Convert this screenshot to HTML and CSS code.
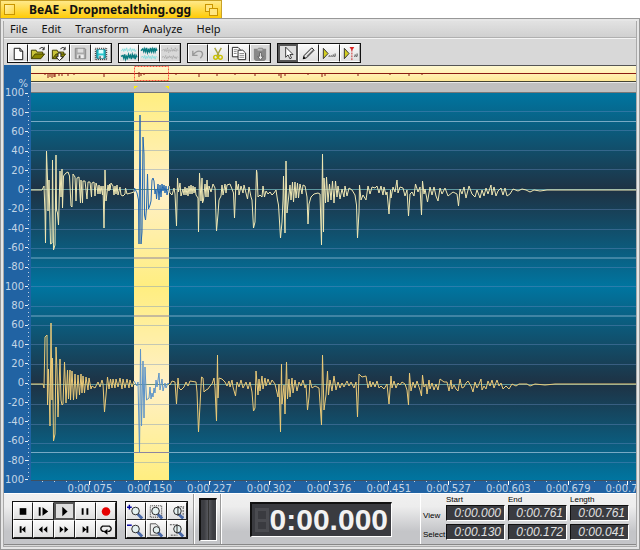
FILE: index.html
```html
<!DOCTYPE html>
<html lang="en">
<head>
    <meta charset="UTF-8">
    <meta name="viewport" content="width=device-width, initial-scale=1.0">
    <title>BeAE - Dropmetalthing.ogg</title>
    <link rel="stylesheet" href="styles.css">
</head>
<body>
    <header class="tab">
        <button class="tab-close" aria-label="Close"></button>
        <h1 class="tab-title">BeAE - Dropmetalthing.ogg</h1>
        <button class="tab-zoom" aria-label="Zoom">
            <svg width="13" height="12" viewBox="0 0 13 12"><rect x=".5" y=".5" width="7" height="7" fill="#ffe680" stroke="#c99500"/><rect x="4.500" y="4.500" width="8" height="7" fill="#ffe680" stroke="#c99500"/></svg>
        </button>
    </header>

    <main class="window">
        <nav class="menubar">
            <button>File</button>
            <button>Edit</button>
            <button>Transform</button>
            <button>Analyze</button>
            <button>Help</button>
        </nav>

        <div class="toolbar">
            <div class="group">
                <button aria-label="New"><svg viewBox="0 0 19 18"><path d="M5.500 3.500h6l3 3v9h-9z" fill="#fff" stroke="#111"/><path d="M11.500 3.500v3h3" fill="none" stroke="#111"/></svg></button>
                <button aria-label="Open"><svg viewBox="0 0 19 18"><path d="M2.500 14.500v-9h5l1 2h6v2" fill="#c9c43a" stroke="#3d3b00"/><path d="M2.500 14.500l4-5h10l-4 5z" fill="#8b8800" stroke="#3d3b00"/><path d="M11 4q3-3 5 0m0-2v3h-2" fill="none" stroke="#222"/></svg></button>
                <button aria-label="Open as"><svg viewBox="0 0 19 18"><path d="M2.500 14.500v-9h5l1 2h6v2" fill="#c9c43a" stroke="#3d3b00"/><path d="M2.500 14.500l4-5h10l-4 5z" fill="#8b8800" stroke="#3d3b00"/><path d="M11 4q3-3 5 0m0-2v3h-2" fill="none" stroke="#222"/><path d="M8.500 8.500h3v4h2.500l-4 4-4-4h2.500z" fill="#fff" stroke="#222"/></svg></button>
                <button class="off" aria-label="Save" disabled><svg viewBox="0 0 19 18"><path d="M4.500 3.500h10l1 1v10h-11z" fill="#aaa" stroke="#888"/><path d="M7 4h6v4H7z" fill="#ddd"/><path d="M6.500 10h7v4h-7z" fill="#eee"/><path d="M8 11h2v3H8z" fill="#777"/></svg></button>
                <button aria-label="Save selection"><svg viewBox="0 0 19 18"><path d="M3.500 3.500h12v12h-12z" fill="none" stroke="#111" stroke-dasharray="1 1"/><path d="M5 5h9v9H5z" fill="#28c7ce" stroke="#067"/><path d="M7 5h5v4H7z" fill="#dff"/><path d="M7 11h5v3H7z" fill="#eee"/><path d="M8 12h1v2H8z"/></svg></button>
            </div>
            <div class="group">
                <button aria-label="Left channel"><svg viewBox="0 0 19 18"><path d="M1 6h1l1-2 1 3 1-3 1 2 1-3 1 4 1-2 1 1 1-3 1 4 1-3 1 2 1-2 1 3 1-2" fill="none" stroke="#8adede"/><path d="M1 12l2-1 1 3 1-4 1 5 1-3 1 2 1-4 1 3 1-2 1 4 1-5 1 3 1-2 1 4 1-4 1 2" fill="none" stroke="#087b80" stroke-width="1.500"/></svg></button>
                <button aria-label="Right channel"><svg viewBox="0 0 19 18"><path d="M1 6l2-2 1 3 1-3 1 3 1-4 1 5 1-3 1 2 1-4 1 4 1-3 1 3 1-4 1 4 1-3 1 2" fill="none" stroke="#087b80" stroke-width="1.500"/><path d="M1 13l2-1 1 2 1-3 1 4 1-3 1 2 1-3 1 3 1-2 1 3 1-4 1 3 1-2 1 3 1-3 1 1" fill="none" stroke="#8adede"/></svg></button>
                <button class="off" aria-label="Both channels" disabled><svg viewBox="0 0 19 18"><path d="M1 6l2-2 1 3 1-3 1 3 1-4 1 5 1-3 1 2 1-4 1 4 1-3 1 3 1-4 1 4 1-3 1 2M1 13l2-1 1 2 1-3 1 4 1-3 1 2 1-3 1 3 1-2 1 3 1-4 1 3 1-2 1 3 1-3 1 1" fill="none" stroke="#aaa" stroke-dasharray="2 1"/></svg></button>
            </div>
            <div class="group">
                <button class="off" aria-label="Undo" disabled><svg viewBox="0 0 19 18"><path d="M4 6v5h5M4 11q4-6 9-4 3 3-1 7" fill="none" stroke="#999" stroke-width="1.500"/></svg></button>
                <button aria-label="Cut"><svg viewBox="0 0 19 18"><path d="M6 3l5 9M13 3l-5 9" stroke="#a8a440" stroke-width="1.500"/><circle cx="7" cy="13" r="2" fill="none" stroke="#c9c000" stroke-width="1.500"/><circle cx="12" cy="13" r="2" fill="none" stroke="#c9c000" stroke-width="1.500"/></svg></button>
                <button aria-label="Copy"><svg viewBox="0 0 19 18"><path d="M2.500 2.500h6l2 2v8h-8z" fill="#fff" stroke="#222"/><path d="M8.500 5.500h5l3 3v7h-8z" fill="#fff" stroke="#222"/><path d="M4 5h4M4 7h3M4 9h3M10 9h5M10 11h5M10 13h5" stroke="#888"/></svg></button>
                <button class="off" aria-label="Paste" disabled><svg viewBox="0 0 19 18"><path d="M3 4h4l1-1h4l1 1h3v11l-2 2H5l-2-2z" fill="#888"/><path d="M7 4h5v2H7z" fill="#bbb"/><path d="M9 8h2v4h2l-3 4-3-4h2z" fill="#eee" stroke="#666"/></svg></button>
            </div>
            <div class="group">
                <button class="on" aria-label="Select tool"><svg viewBox="0 0 19 18"><path d="M6.500 1.500v13l3-3 2.500 5 2-1-2-4.500h4z" fill="#fff" stroke="#111"/></svg></button>
                <button aria-label="Pencil tool"><svg viewBox="0 0 19 18"><path d="M4.500 14.500l1-3.500 8-8 2.500 2.500-8 8z" fill="#e8e8e8" stroke="#111"/><path d="M4 15l1-3 2 2z"/><path d="M8 12l7-7" stroke="#777"/></svg></button>
                <button aria-label="Play preview"><svg viewBox="0 0 19 18"><path d="M3.500 3.500v11l5-5.500z" fill="#d4cf20" stroke="#333"/><path d="M9 12h1v-1m1 1h1v-1m1 1h1v-2m1 2h1v-3" fill="none" stroke="#444"/></svg></button>
                <button aria-label="Play marker"><svg viewBox="0 0 19 18"><path d="M3.500 3.500v11l5-5.500z" fill="#d4cf20" stroke="#333"/><path d="M11.500 5v11" stroke="#c22" stroke-dasharray="2 1"/><path d="M9 2h5l-2.500 4z" fill="#d22"/><path d="M14 12h1v-2m1 2h1v-3" fill="none" stroke="#444"/></svg></button>
            </div>
        </div>

        <section class="editor">
            <div class="levels">
                <span class="unit">%</span>
                <span>100</span><span>80</span><span>60</span><span>40</span><span>20</span><span>0</span><span>-20</span><span>-40</span><span>-60</span><span>-80</span>
                <span>100</span><span>80</span><span>60</span><span>40</span><span>20</span><span>0</span><span>-20</span><span>-40</span><span>-60</span><span>-80</span>
                <span>100</span>
            </div>
            <div class="tracks">
                <svg class="overview" viewBox="0 0 605 15" preserveAspectRatio="none">
                    <path class="over-wave" d="M0 7.500h605M14 7v2M17 7v5M19 7v4M21 7v5M23 7v4M24 7v4M28 7v3M31 7v3M37 7v3M43 7v2M73 7v4M108 6v5M110 7v3M113 7v2M145 7v2M168 7v4M186 7v3M204 7v2M224 7v3M248 7v3M250 7v5M254 7v3M277 7v2M291 7v4M294 7v3M327 7v3M359 7v2M378 7v3M391 7v2"/>
                    <rect class="over-sel" x="103.500" y=".5" width="34" height="14"/>
                </svg>
                <svg class="markers" viewBox="0 0 605 12" preserveAspectRatio="none">
                    <path d="M103 4h4l-4 4zM138 4h-4l4 4z"/>
                </svg>
                <svg class="wave" viewBox="31 93 605 387" preserveAspectRatio="none">
                    <defs>
                        <linearGradient id="deep" x1="0" y1="0" x2="0" y2="1">
                            <stop offset="0" stop-color="#0075a0"/>
                            <stop offset=".5" stop-color="#1e3244"/>
                            <stop offset="1" stop-color="#0075a0"/>
                        </linearGradient>
                        <linearGradient id="glow" x1="0" y1="0" x2="0" y2="1">
                            <stop offset="0" stop-color="#ffee80"/>
                            <stop offset=".5" stop-color="#fff0c8"/>
                            <stop offset="1" stop-color="#ffee80"/>
                        </linearGradient>
                        <clipPath id="picked"><rect x="134" y="93" width="35" height="387"/></clipPath>
                        <path id="left" d="M31 190H42L43 188 44 186 45 213 45.500 243 46.500 151 47.500 179 48 211 49 180 50.500 244 52 243 52.500 160 53.500 250 55 245 56 155 56.500 210 57.500 213 58.500 225 60 171 61 197 62 169 62.500 208 63.500 176 66 173 68 172 69.500 176 71 206 72 207 73 174 75 177 76 201 77 178 79 177 80.500 203 81 180 82.500 203 83 181 85 181 87 199 88 182 90 182 91.500 197 92 183 94 182 95 196 96 183 97 186 98 194 99 185 100 194 101 186 102.500 195 103 186 103.500 207 104 228 105 170 106 201 107 193 108 185 109 191 109.500 184 110 190 111 183 113 186 114 195 115 186 116 194 117 185 118 195 120 187 121 195 123 196 125 194 125.500 188 127 194 131 193 134 192 134.500 188 137 193 138.500 200 139 244 140 115 140.500 180 141 244 142 232 143 137 144 154 144.500 215 145.500 220 146.500 208 147 191 147.500 174 148.500 209 150 205 151 201 152 180 153 178 154 181 155 194 156 189 156.500 199 158 184 159 200 160 185 161 197 162 184 163 191 164 185 165 193 166 186 167 195 169 186 170 193 172 195 174 188 175 194 176.500 226 177.500 178 178.500 192 180 183 181 196 183 189 184 195 185 187 186 195 187 188 188 196 189 186 190 194 191 185 192 194 193 186 194 193 195 187 196 195 198 198 198.500 232 199.500 173 201 201 202 178 202.500 203 203.500 200 205 184 206 197 207 180 208 197 209 186 211 192 213 184 215 188 216.500 231 218 214 219 200 221 196 222 185 223 195 225 184 226 193 227 185 230 184 232 189 233.500 193 234.500 218 236 181 237 190 238.500 184 239 195 241 186 243 193 244 185 246 193 247.500 199 249 187 251 197 252 200 253.500 228 255 222 256.500 170 257 173 258 197 260 195 262 197 263 186 264.500 197 266 191 268 194 270 192 272 195 274 193 276 190 277.500 200 278.500 205 280.500 238 282 222 283 200 283.500 176 284.500 215 285 233 286 161 287 213 288 203 290 185 291 200 292.500 182 293.500 202 295 182 296 198 297.500 183 298.500 198 300 184 302 194 303 185 305 186 307 197 308 224 309 204 311 197 314 194 318 193 320 194 321.500 245 322.500 154 323.500 232 324 178 325.500 203 326.500 177 328 202 329.500 184 331 200 332.500 181 334 203 335.500 181 337 197 338 186 340 199 342 189 344 197 345 186 347 196 349 188 352 190 355 195 356.500 205 357.500 238 359 212 359.500 185 361 200 363 195 366 200 368 186 370 194 372 187 375 188 377 186 379 193 381 186 383 195 384 187 386 195 387 192 389 214 390.500 190 391 198 393 187 395 192 397 180 398 193 400 187 403 188 405 196 407 190 408.500 216 410 194 412 192 414 196 415.500 184 418 192 420 187 421.500 215 422.500 181 424 194 425 189 427.500 202 430 187 432 195 434 187 436 196 438 201 440 188 442 194 445 188 448 196 453 192 457 194 458.500 206 460 189 462 194 464 187 466 198 469 186 472 194 475 197 477 190 480 198 482 190 484 196 486 188 488 194 491 185 492 195 494 187 496 196 498 191 501 188 503 195 505 188 507 196 510 194 513 189 518 191 522 189 526 190 530 192 534 190 540 191 547 190H636"/>
                        <path id="right" d="M31 384H43L44 388 45 337 47 335 47.500 405 48.500 369 50 426 51 323 52 400 52.500 358 53.500 441 55 434 56 347 57 370 58 417 60 359 61 400 62 405 63 404 64.500 362 66 403 67.500 370 68.500 399 70 370 70.500 400 72 371 73.500 400 75 374 76.500 399 78 375 79.500 395 81 374 82 393 83 376 84.500 393 86 377 88 390 89 378 91 389 92 386 95 388 98 382 100 387 102 380 103 384 104.500 412 106 395 107.500 377 109 389 110.500 379 112 388 113 379 115 388 116 379 118 387 120 378 122 389 123 379 125 388 127 379 129 388 130 380 132 387 134 381 137 386 138 382 139.500 453 140.500 349 141.500 426 143 361 144 418 145 367 146.500 400 149 398 150 387 151 399 152 393 153 397 154 388 155 393 156 380 157 387 159 373 160 390 162 379 163 391 165 383 166 388 168 383 170 385 172 381 175 382 176.500 404 178 378 179 388 181 390 184 387 186 382 188 386 190 381 196 382 197 392 198.500 432 200 405 201.500 377 203 378 204 392 206 390 208 389 210 386 212 384 214 378 215 388 216.500 421 217.500 355 218 398 219 378 222 379 225 382 227 386 229 381 230 387 232 380 233 387 235.500 396 237 382 239 387 241 380 243 388 246 382 248 389 250 382 252 392 253.500 411 255 408 256 371 258 395 259 379 260 391 262 376 263 389 265 378 266 386 268 379 270 385 272 380 275 384 278 397 279 384 280.500 432 281.500 364 282 404 284 385 285 414 286.500 362 287.500 399 289 379 290 397 292 378 293 393 295 380 297 391 299 382 301 386 303 380 305 388 306 385 307.500 410 309 397 310 380 312 388 315 386 319 388 321.500 425 322.500 355 324 410 326 395 327.500 371 328.500 395 330 380 332 391 334 376 336 390 338 382 340 388 342 383 344 387 347 381 349 386 351 382 354 388 356 382 357.500 417 359 374 362 377 366 376 368 388 370 381 371 387 373 382 375 387 377 381 379 388 381 386 384 389 387 384 389 404 391 376 392 388 394 381 396 388 398 383 400 385 402 382 405 384 407 390 408.500 405 409.500 373 411 391 413 382 415 388 417 381 420 390 421.500 396 422.500 375 424 387 426 384 427 394 429 380 430 389 432 383 434 390 436 384 438 390 440 379 444 382 447 382 449 391 451 380 452 389 454 385 456 389 458 391 460 379 462 388 464 387 466 383 468 381 471 386 473 392 475 382 477 388 479 384 481 379 482 390 484 386 486 389 488 381 490 386 492 380 494 388 497 380 499 386 501 383 503 389 506 386 509 389 512 384 516 386 519 384 527 384 530 386 535 384 545 385 555 384H636"/>
                    </defs>
                    <rect x="31" y="93" width="605" height="194" fill="url(#deep)"/>
                    <rect x="31" y="287" width="605" height="193" fill="url(#deep)"/>
                    <path class="grid" d="M31 111.500h605M31 130.500h605M31 150.500h605M31 169.500h605M31 209.500h605M31 229.500h605M31 248.500h605M31 267.500h605M31 286.500h605M31 306.500h605M31 325.500h605M31 344.500h605M31 364.500h605M31 404.500h605M31 424.500h605M31 443.500h605M31 462.500h605"/>
                    <path class="limit" d="M31 121.500h605M31 258h605M31 316h605M31 452.500h605"/>
                    <path class="zero" d="M31 189.500h605M31 384.500h605"/>
                    <use class="left" href="#left"/>
                    <use class="right" href="#right"/>
                    <g clip-path="url(#picked)">
                        <rect x="134" y="93" width="35" height="194" fill="url(#glow)"/>
                        <rect x="134" y="287" width="35" height="193" fill="url(#glow)"/>
                        <path class="grid" d="M134 111.500h35M134 130.500h35M134 150.500h35M134 169.500h35M134 209.500h35M134 229.500h35M134 248.500h35M134 267.500h35M134 286.500h35M134 306.500h35M134 325.500h35M134 344.500h35M134 364.500h35M134 404.500h35M134 424.500h35M134 443.500h35M134 462.500h35"/>
                        <path class="limit dark" d="M134 121.500h35M134 258h35M134 316h35M134 452.500h35"/>
                        <path class="zero dark" d="M134 189.500h35M134 384.500h35"/>
                        <use class="hit" href="#left"/>
                        <use class="hit soft" href="#right"/>
                    </g>
                </svg>
                <div class="times">
                    <span>0:00.075</span><span>0:00.150</span><span>0:00.227</span><span>0:00.302</span><span>0:00.376</span><span>0:00.451</span><span>0:00.527</span><span>0:00.603</span><span>0:00.679</span><span>0:00.754</span>
                </div>
            </div>
        </section>

        <footer class="panel">
            <div class="controls">
                <div class="pad transport">
                    <button aria-label="Stop"><svg viewBox="0 0 19 16"><path d="M6 5h7v7H6z"/></svg></button>
                    <button aria-label="Play selection"><svg viewBox="0 0 19 16"><path d="M5 4h2v9H5zM9 4l6 4.500L9 13z"/></svg></button>
                    <button class="on" aria-label="Play"><svg viewBox="0 0 19 16"><path d="M7 3l6 5.500L7 14z"/></svg></button>
                    <button aria-label="Pause"><svg viewBox="0 0 19 16"><path d="M6 5h2v7H6zM11 5h2v7h-2z"/></svg></button>
                    <button aria-label="Record"><svg viewBox="0 0 19 16"><circle cx="9.500" cy="8.500" r="4.500" fill="#e60000"/></svg></button>
                    <button aria-label="To start"><svg viewBox="0 0 19 16"><path d="M6 5h2v7H6zM12 5v7L8 8.500z"/></svg></button>
                    <button aria-label="Rewind"><svg viewBox="0 0 19 16"><path d="M9 5v7L5 8.500zM14 5v7l-4-3.500z"/></svg></button>
                    <button aria-label="Forward"><svg viewBox="0 0 19 16"><path d="M5 5v7l4-3.500zM10 5v7l4-3.500z"/></svg></button>
                    <button aria-label="To end"><svg viewBox="0 0 19 16"><path d="M11 5h2v7h-2zM7 5v7l4-3.500z"/></svg></button>
                    <button aria-label="Loop"><svg viewBox="0 0 19 16"><path d="M8 10.500H6q-4-3 0-5.500h7q4 2.500 0 5.500h-2" fill="none" stroke="#111" stroke-width="1.500"/><path d="M11 8v6l-4-3z"/></svg></button>
                </div>
                <div class="pad zooms">
                    <button aria-label="Zoom in"><svg viewBox="0 0 19 16"><path d="M11 11l5 5" stroke="#4868a8" stroke-width="3"/><circle cx="9" cy="8" r="4" fill="#e4f1f1" stroke="#222"/><path d="M0 4h5M2.500 1.500v5" stroke="#0000a0" stroke-width="1.500"/></svg></button>
                    <button aria-label="Zoom to selection"><svg viewBox="0 0 19 16"><path d="M3.500 2.500h12v12h-12z" fill="none" stroke="#222" stroke-dasharray="1 1"/><path d="M11 11l5 5" stroke="#4868a8" stroke-width="3"/><circle cx="9" cy="8" r="4" fill="#e4f1f1" stroke="#222"/></svg></button>
                    <button aria-label="Zoom left"><svg viewBox="0 0 19 16"><path d="M10 3.500h7M16 4v10" fill="none" stroke="#444" stroke-dasharray="2 1"/><path d="M11 11l5 5" stroke="#4868a8" stroke-width="3"/><circle cx="10" cy="8" r="4" fill="#e4f1f1" stroke="#222"/><path d="M10.500 3v10" stroke="#222"/></svg></button>
                    <button aria-label="Zoom out"><svg viewBox="0 0 19 16"><path d="M11 11l5 5" stroke="#4868a8" stroke-width="3"/><circle cx="9" cy="8" r="4" fill="#e4f1f1" stroke="#222"/><path d="M0 4h5" stroke="#0000a0" stroke-width="1.500"/></svg></button>
                    <button aria-label="Zoom all"><svg viewBox="0 0 19 16"><path d="M3.500 2.500h6l3 3v9h-9z" fill="#eee" stroke="#555"/><path d="M11 11l5 5" stroke="#4868a8" stroke-width="3"/><circle cx="10" cy="9" r="3.500" fill="#e4f1f1" stroke="#222"/></svg></button>
                    <button aria-label="Zoom right"><svg viewBox="0 0 19 16"><path d="M2 3.500h7M3 14.500h7" stroke="#444" stroke-dasharray="2 1"/><path d="M11 11l5 5" stroke="#4868a8" stroke-width="3"/><circle cx="10" cy="8" r="4" fill="#e4f1f1" stroke="#222"/><path d="M9.500 3v10" stroke="#222"/></svg></button>
                </div>
            </div>
            <div class="meter"><div class="vu"></div></div>
            <div class="clock">
                <div class="lcd big"><i class="blank"></i><output>0:00.000</output></div>
            </div>
            <table class="ranges">
                <tr><td></td><th scope="col">Start</th><th scope="col">End</th><th scope="col">Length</th></tr>
                <tr><th scope="row">View</th><td><div class="lcd">0:00.000</div></td><td><div class="lcd">0:00.761</div></td><td><div class="lcd">0:00.761</div></td></tr>
                <tr><th scope="row">Select</th><td><div class="lcd">0:00.130</div></td><td><div class="lcd">0:00.172</div></td><td><div class="lcd">0:00.041</div></td></tr>
            </table>
        </footer>
    </main>
</body>
</html>
```
FILE: styles.css
```css
:root {
    --ruler: #2163a3;
    --scale-text: #c3d5e6;
    --face: #d8d8d8;
    --edge: #989898;
}

* {
    box-sizing: border-box;
}

body {
    margin: 0;
    min-height: 100vh;
    display: flex;
    flex-direction: column;
    background: #fff;
    font-family: "Noto Sans", sans-serif;
    font-size: 11px;
    color: #111;
}

button {
    margin: 0;
    padding: 0;
    border: 0;
    background: none;
    font: inherit;
    color: inherit;
}

svg {
    display: block;
}

/* title tab */
.tab {
    align-self: flex-start;
    display: flex;
    align-items: center;
    width: 222px;
    height: 18px;
    padding: 0 3px;
    border: 1px solid #c9a227;
    border-bottom: 0;
    background: linear-gradient(#ffe989, #ffcb05);
}

.tab-close {
    width: 11px;
    height: 11px;
    border: 1px solid #c99500;
    background: linear-gradient(135deg, #fff2b0, #ffd640);
}

.tab-title {
    flex: 1;
    margin: 0 0 0 14px;
    font-size: 12px;
    line-height: 16px;
    font-weight: 700;
    white-space: nowrap;
}

/* window frame */
.window {
    flex: 1;
    display: flex;
    flex-direction: column;
    border: 1px solid var(--edge);
    box-shadow: inset 0 0 0 2px #e6e6e6, inset 0 0 0 3px #aaa;
    padding: 2px 3px 4px;
    background: var(--face);
}

.menubar {
    display: flex;
    gap: 14px;
    height: 17px;
    padding: 0 6px;
    background: linear-gradient(#e2e2e2, #d0d0d0);
    border-bottom: 1px solid #b0b0b0;
}

.menubar button {
    line-height: 14px;
}

.toolbar {
    display: flex;
    gap: 6px;
    height: 27px;
    padding: 4px 3px;
    border-top: 1px solid #f4f4f4;
}

.group {
    display: flex;
    height: 20px;
    border: 1px solid #111;
}

.group button,
.pad button {
    width: 21px;
    border: 1px solid #fff;
    border-right-color: #222;
    background: linear-gradient(#fafafa, #dedede);
}

.group button:first-child {
    width: 20px;
}

.group button:last-child {
    width: 20px;
    border-right-color: #aaa;
}

.group button.off {
    background: #d8d8d8;
}

.group .on,
.pad .on {
    border: 2px solid #555;
    background: #ddd;
}

.group svg {
    width: 18px;
    height: 17px;
}

.group .on svg {
    width: 16px;
    height: 14px;
}

/* editor */
.editor {
    flex: 1;
    display: flex;
    background: var(--ruler);
    font-family: "DejaVu Sans", sans-serif;
    font-size: 10px;
    color: var(--scale-text);
}

.levels {
    flex: none;
    display: flex;
    flex-direction: column;
    justify-content: space-between;
    width: 27px;
    padding: 14px 3px 8px 0;
    background: repeating-linear-gradient(transparent 0 3px, var(--scale-text) 3px 4px) 24px 28px / 1px calc(100% - 41px) no-repeat;
}

.levels span {
    display: flex;
    justify-content: flex-end;
    align-items: center;
    gap: 1px;
    height: 10px;
    line-height: 10px;
}

.levels span::after {
    content: "";
    width: 3px;
    height: 1px;
    background: #e8f0f8;
}

.levels .unit {
    flex: none;
    margin-bottom: -10px;
}

.levels .unit::after {
    display: none;
}

.tracks {
    flex: 1;
    min-width: 0;
    display: flex;
    flex-direction: column;
}

.overview {
    width: 100%;
    height: 17px;
    border-top: 1px solid #555;
    border-bottom: 1px solid #443;
    background: linear-gradient(#fff8d0, #ffe896);
}

.over-wave {
    fill: none;
    stroke: #8b1a10;
}

.over-sel {
    fill: none;
    stroke: #ff5040;
    stroke-dasharray: 2 1;
}

.markers {
    width: 100%;
    height: 11px;
    border-top: 1px solid #e8e8e8;
    border-bottom: 1px solid #777;
    background: #c0c0c0;
    fill: #fff000;
}

.wave {
    flex: 1;
    width: 100%;
    height: 0;
    min-height: 240px;
}

.wave path,
.wave use {
    fill: none;
    stroke-width: 1px;
    vector-effect: non-scaling-stroke;
}

.wave .grid {
    stroke: #6c8bc0;
    stroke-opacity: .4;
}

.wave .limit {
    stroke: #78a9c4;
}

.wave .limit.dark {
    stroke: #8c85a0;
}

.wave .zero {
    stroke: #5d98a0;
}

.wave .zero.dark {
    stroke: #6f9272;
}

.wave .left {
    stroke: #f0e8b4;
}

.wave .right {
    stroke: #eccb78;
}

.wave .hit {
    stroke: #2468b0;
}

.wave .soft {
    stroke: #5c93c8;
}

.times {
    display: flex;
    height: 13px;
    padding-left: 29px;
    overflow: hidden;
    border-top: 1px solid #405060;
    background: repeating-linear-gradient(90deg, transparent 0 11px, var(--scale-text) 11px 12px) 0 0 / 100% 1px no-repeat;
}

/* one cell per 0.075 s */
.times span {
    flex: none;
    width: 10.38%;
    text-align: center;
    line-height: 16px;
    background: linear-gradient(#fff, #fff) 50% 0 / 1px 4px no-repeat;
}

/* bottom panel */
.panel {
    display: flex;
    height: 52px;
    border-top: 1px solid #fff;
    border-bottom: 1px solid #888;
    background: linear-gradient(#f0f0f0, #ededed 25%, #c4c5c8 75%);
}

.controls {
    flex: none;
    display: flex;
    gap: 8px;
    width: 190px;
    padding: 7px 8px;
    border-right: 1px solid #999;
}

.pad {
    display: grid;
    grid-template-columns: 20px 21px 21px 21px 20px;
    grid-template-rows: 18px 18px;
    border: 1px solid #111;
    height: 38px;
}

.zooms {
    grid-template-columns: 20px 21px 20px;
}

.pad button {
    width: auto;
    border-bottom-color: #222;
}

.pad svg {
    width: 18px;
    height: 16px;
}

.pad .on svg {
    width: 17px;
    height: 14px;
}

.meter {
    flex: none;
    width: 27px;
    padding: 4px;
    border-left: 1px solid #fff;
    border-right: 1px solid #999;
}

.vu {
    height: 43px;
    width: 18px;
    border: 2px solid #111;
    border-right: 1px solid #fff;
    border-bottom: 1px solid #fff;
    background: linear-gradient(90deg, #3c3d42 20%, #55565b 45%, #333 50%, #55565b 55%, #3c3d42 80%);
}

.clock {
    flex: 1;
    display: flex;
    justify-content: center;
    align-items: flex-start;
    padding-top: 8px;
    border-left: 1px solid #fff;
    border-right: 1px solid #fff;
}

.lcd {
    height: 16px;
    padding-right: 3px;
    border: 1px solid #111;
    border-right-color: #fff;
    border-bottom-color: #fff;
    background: #3a3b40;
    color: #e0e0e0;
    font: italic 12px/14px "Liberation Sans", sans-serif;
    text-align: right;
}

.lcd.big {
    display: flex;
    justify-content: space-between;
    align-items: center;
    width: 142px;
    height: 35px;
    padding: 0 3px;
    border-width: 2px 1px 1px 2px;
    color: #f2f2f2;
    font: bold 30px/32px "Liberation Sans", sans-serif;
}

/* unlit leading digit */
.blank {
    width: 14px;
    height: 24px;
    border: 3px solid #4a4b50;
    background: linear-gradient(#4a4b50, #4a4b50) 0 50% / 100% 3px no-repeat;
}

.ranges {
    flex: none;
    align-self: flex-start;
    width: 211px;
    margin: 1px 4px 0 0;
    border-spacing: 0;
    table-layout: fixed;
    font: 8px/10px "Liberation Sans", sans-serif;
    color: #000;
}

.ranges th,
.ranges td {
    padding: 0;
    font-weight: 400;
    text-align: left;
    vertical-align: bottom;
}

.ranges th[scope="row"] {
    padding-bottom: 3px;
}

.ranges td:not(:first-child) {
    padding: 0 3px 3px 0;
}

.ranges tr > :first-child {
    width: 25px;
    padding-left: 2px;
}
```
